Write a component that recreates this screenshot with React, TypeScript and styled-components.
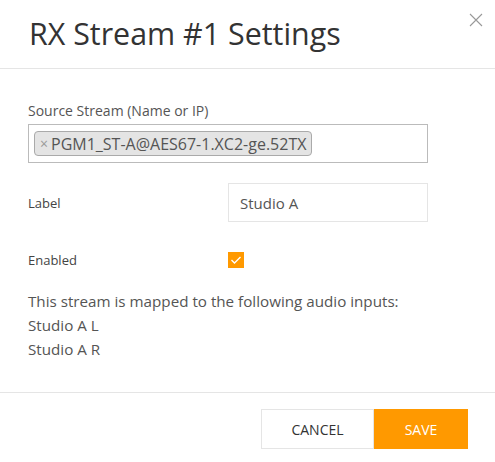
import React from 'react';
import styled, { createGlobalStyle } from 'styled-components';

const GlobalStyle = createGlobalStyle`
  html, body {
    margin: 0;
    padding: 0;
    background: #fff;
  }
  body {
    font-family: 'Open Sans', 'Noto Sans', Arial, sans-serif;
    color: #333;
  }
`;

const Dialog = styled.div`
  width: 495px;
  height: 462px;
  display: flex;
  flex-direction: column;
  background: #fff;
`;

const Header = styled.div`
  position: relative;
  height: 69px;
  box-sizing: border-box;
  padding: 0 29px 2px;
  display: flex;
  align-items: center;
  border-bottom: 1px solid #e5e5e5;
`;

const Title = styled.h1`
  margin: 0;
  font-size: 30.4px;
  font-weight: 400;
  color: #333;
`;

const Close = styled.button`
  position: absolute;
  top: 12px;
  right: 11px;
  width: 16px;
  height: 16px;
  padding: 0;
  border: 0;
  background: none;
  cursor: pointer;
`;

const Body = styled.div`
  flex: 1;
  padding: 32px 28px 0 28px;
  display: flex;
  flex-direction: column;
`;

const FieldLabel = styled.label`
  display: block;
  font-size: 14px;
  color: #555;
  margin-bottom: 4px;
`;

const TagInput = styled.div`
  width: 400px;
  height: 39px;
  box-sizing: border-box;
  border: 1px solid #bbb;
  padding: 6px 5px;
  display: flex;
  align-items: flex-start;
`;

const Tag = styled.span`
  display: inline-flex;
  align-items: center;
  height: 25px;
  box-sizing: border-box;
  padding: 0 5px 0 5px;
  background: #e4e4e4;
  border: 1px solid #aaa;
  border-radius: 4px;
  font-size: 16px;
  color: #555;
`;

const TagRemove = styled.span`
  color: #999;
  font-size: 14px;
  margin-right: 3px;
`;

const Row = styled.div<{ $gap: number }>`
  display: grid;
  grid-template-columns: 200px 200px;
  align-items: center;
  margin-top: ${p => p.$gap}px;
`;

const RowLabel = styled.span`
  font-size: 13px;
  color: #444;
`;

const TextInput = styled.div`
  height: 39px;
  box-sizing: border-box;
  border: 1px solid #e5e5e5;
  padding: 0 11px;
  display: flex;
  align-items: center;
  font-size: 15px;
  color: #555;
`;

const Checkbox = styled.span`
  width: 16px;
  height: 16px;
  background: #ff9900;
  display: flex;
  align-items: center;
  justify-content: center;
`;

const Mapping = styled.div`
  margin-top: 20px;
  font-size: 15.2px;
  line-height: 24px;
  color: #555;
`;

const Footer = styled.div`
  height: 70px;
  box-sizing: border-box;
  border-top: 1px solid #e5e5e5;
  display: flex;
  justify-content: flex-end;
  align-items: flex-start;
  padding: 16px 27px 0 0;
`;

const Button = styled.button<{ $primary?: boolean }>`
  height: 40px;
  box-sizing: border-box;
  font-family: inherit;
  font-size: 14px;
  text-transform: uppercase;
  cursor: pointer;
  border: 1px solid ${p => (p.$primary ? '#ff9900' : '#e5e5e5')};
  background: ${p => (p.$primary ? '#ff9900' : '#fff')};
  color: ${p => (p.$primary ? '#fff' : '#333')};
  width: ${p => (p.$primary ? '94px' : '113px')};
`;

export default function App() {
  return (
    <>
      <GlobalStyle />
      <Dialog>
        <Header>
          <Title>RX Stream #1 Settings</Title>
          <Close aria-label="Close">
            <svg width="16" height="16" viewBox="0 0 16 16">
              <path d="M2 2 L14 14 M14 2 L2 14" stroke="#999" strokeWidth="1.1" fill="none" />
            </svg>
          </Close>
        </Header>
        <Body>
          <FieldLabel>Source Stream (Name or IP)</FieldLabel>
          <TagInput>
            <Tag>
              <TagRemove>×</TagRemove>PGM1_ST-A@AES67-1.XC2-ge.52TX
            </Tag>
          </TagInput>
          <Row $gap={20}>
            <RowLabel>Label</RowLabel>
            <TextInput>Studio A</TextInput>
          </Row>
          <Row $gap={29}>
            <RowLabel>Enabled</RowLabel>
            <Checkbox>
              <svg width="12" height="10" viewBox="0 0 12 10">
                <path d="M1.5 5 L4.5 8 L10.5 2" stroke="#fff" strokeWidth="1.4" fill="none" />
              </svg>
            </Checkbox>
          </Row>
          <Mapping>
            This stream is mapped to the following audio inputs:
            <br />
            Studio A L
            <br />
            Studio A R
          </Mapping>
        </Body>
        <Footer>
          <Button>Cancel</Button>
          <Button $primary>Save</Button>
        </Footer>
      </Dialog>
    </>
  );
}
